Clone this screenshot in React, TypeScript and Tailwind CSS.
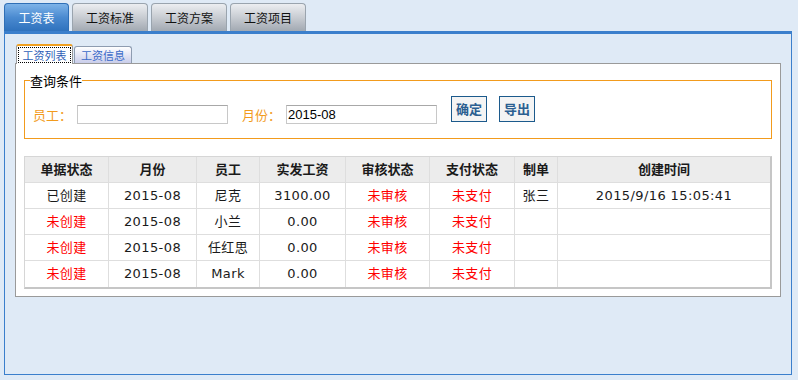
import React from "react";

const cjk = "font-['Noto_Sans_CJK_SC','Noto_Sans',sans-serif]";
const mixed = "font-['DejaVu_Sans','Noto_Sans_CJK_SC',sans-serif]";

const topTabs = ["工资标准", "工资方案", "工资项目"];

const cols = ["单据状态", "月份", "员工", "实发工资", "审核状态", "支付状态", "制单", "创建时间"];

type Row = {
  status: string;
  month: string;
  name: string;
  pay: string;
  audit: string;
  paid: string;
  maker: string;
  created: string;
};

const rows: Row[] = [
  { status: "已创建", month: "2015-08", name: "尼克", pay: "3100.00", audit: "未审核", paid: "未支付", maker: "张三", created: "2015/9/16 15:05:41" },
  { status: "未创建", month: "2015-08", name: "小兰", pay: "0.00", audit: "未审核", paid: "未支付", maker: "", created: "" },
  { status: "未创建", month: "2015-08", name: "任红思", pay: "0.00", audit: "未审核", paid: "未支付", maker: "", created: "" },
  { status: "未创建", month: "2015-08", name: "Mark", pay: "0.00", audit: "未审核", paid: "未支付", maker: "", created: "" },
];

function Cell({ children, last, bottom, red, head }: { children?: React.ReactNode; last?: boolean; bottom?: boolean; red?: boolean; head?: boolean }) {
  return (
    <div
      className={`h-[26px] flex items-center justify-center text-[13px] border-[#dedede] ${last ? "" : "border-r"} ${bottom ? "" : "border-b"} ${red ? "text-[#ff0000]" : "text-[#1a1a1a]"} ${head ? "bg-[#ececec] font-bold" : "bg-white tracking-[0.4px]"}`}
    >
      {children}
    </div>
  );
}

export default function App() {
  return (
    <div className="w-[798px] h-[380px] bg-[#dfeaf6] pt-[3px] overflow-hidden">
      {/* Top tabs */}
      <div className={`flex gap-[3px] pl-[4px] h-[28px] ${cjk}`}>
        <div className="w-[65px] h-[28px] rounded-t-[4px] border border-b-0 border-[#2f6fb6] bg-gradient-to-b from-[#7db3e8] via-[#4a8ad0] to-[#2f72bd] flex items-center justify-center text-white text-[12px]">
          工资表
        </div>
        {topTabs.map((t) => (
          <div
            key={t}
            className="w-[76px] h-[28px] rounded-t-[4px] border border-b-0 border-[#9aa4ae] bg-gradient-to-b from-[#eceef1] via-[#c8ccd2] to-[#a2a9b2] flex items-center justify-center text-[#111] text-[12px]"
          >
            {t}
          </div>
        ))}
      </div>

      {/* Panel */}
      <div className="ml-[4px] w-[788px] h-[344px] border border-t-[3px] border-[#3b7fcc] pt-[9px]">
        {/* Sub tabs */}
        <div className={`flex items-end ml-[11px] h-[20px] ${cjk}`}>
          <div className="relative z-10 w-[57px] h-[20px] -mb-px bg-white border-x border-[#9a9a9a] border-t-2 border-t-[#f0a020] rounded-t-[3px] px-[1px] pt-[1px]">
            <div className="h-[16px] border border-dotted border-black flex items-center justify-center text-[11px] text-[#2f5fb8]">
              工资列表
            </div>
          </div>
          <div className="ml-[1px] w-[58px] h-[17px] border border-b-0 border-[#8e9cb0] rounded-t-[3px] bg-gradient-to-b from-white to-[#c9cdea] flex items-center justify-center text-[11px] text-[#3a6ac8]">
            工资信息
          </div>
        </div>

        {/* White box */}
        <div className="ml-[10px] w-[766px] h-[234px] bg-white border border-[#9a9a9a] px-[8px] pt-[8px]">
          <fieldset className="border border-[#f29b1d] p-0 m-0 h-[67px]">
            <legend className={`ml-[5px] p-0 text-[13px] leading-[17px] text-black ${cjk}`}>查询条件</legend>
            <div className="flex items-start pl-[8px]">
              <span className={`mt-[16px] w-[44px] h-[19px] leading-[19px] text-[13px] text-[#f29b1d] ${cjk}`}>员工：</span>
              <input
                className="mt-[16px] w-[151px] h-[19px] border border-[#c8c8c8] border-t-[#a8a8a8] outline-none px-[2px] text-[13px]"
                defaultValue=""
              />
              <span className={`ml-[14px] mt-[16px] w-[44px] h-[19px] leading-[19px] text-[13px] text-[#f29b1d] ${cjk}`}>月份：</span>
              <input
                className="mt-[16px] w-[151px] h-[19px] border border-[#c8c8c8] border-t-[#a8a8a8] outline-none px-[1px] text-[13px] text-black font-['Liberation_Sans',sans-serif]"
                defaultValue="2015-08"
              />
              <button className={`ml-[14px] mt-[7px] w-[36px] h-[26px] border border-[#1c5a8c] bg-[#f4f4f4] text-[13px] font-bold text-[#2c5f91] ${cjk}`}>
                确定
              </button>
              <button className={`ml-[12px] mt-[7px] w-[36px] h-[26px] border border-[#1c5a8c] bg-[#f4f4f4] text-[13px] font-bold text-[#2c5f91] ${cjk}`}>
                导出
              </button>
            </div>
          </fieldset>

          {/* Table */}
          <div className={`mt-[17px] w-[748px] border-l border-t border-[#d6d6d6] border-r-2 border-b-2 border-r-[#c6c6c6] border-b-[#c6c6c6] ${mixed}`}>
            <div className="grid grid-cols-[84px_88px_63px_86px_84px_85px_43px_212px]">
              {cols.map((c, i) => (
                <Cell key={c} head last={i === cols.length - 1}>
                  {c}
                </Cell>
              ))}
              {rows.map((r, ri) => {
                const bottom = ri === rows.length - 1;
                return (
                  <React.Fragment key={ri}>
                    <Cell bottom={bottom} red={r.status === "未创建"}>{r.status}</Cell>
                    <Cell bottom={bottom}>{r.month}</Cell>
                    <Cell bottom={bottom}>{r.name}</Cell>
                    <Cell bottom={bottom}>{r.pay}</Cell>
                    <Cell bottom={bottom} red>{r.audit}</Cell>
                    <Cell bottom={bottom} red>{r.paid}</Cell>
                    <Cell bottom={bottom}>{r.maker}</Cell>
                    <Cell bottom={bottom} last>{r.created}</Cell>
                  </React.Fragment>
                );
              })}
            </div>
          </div>
        </div>
      </div>
    </div>
  );
}
